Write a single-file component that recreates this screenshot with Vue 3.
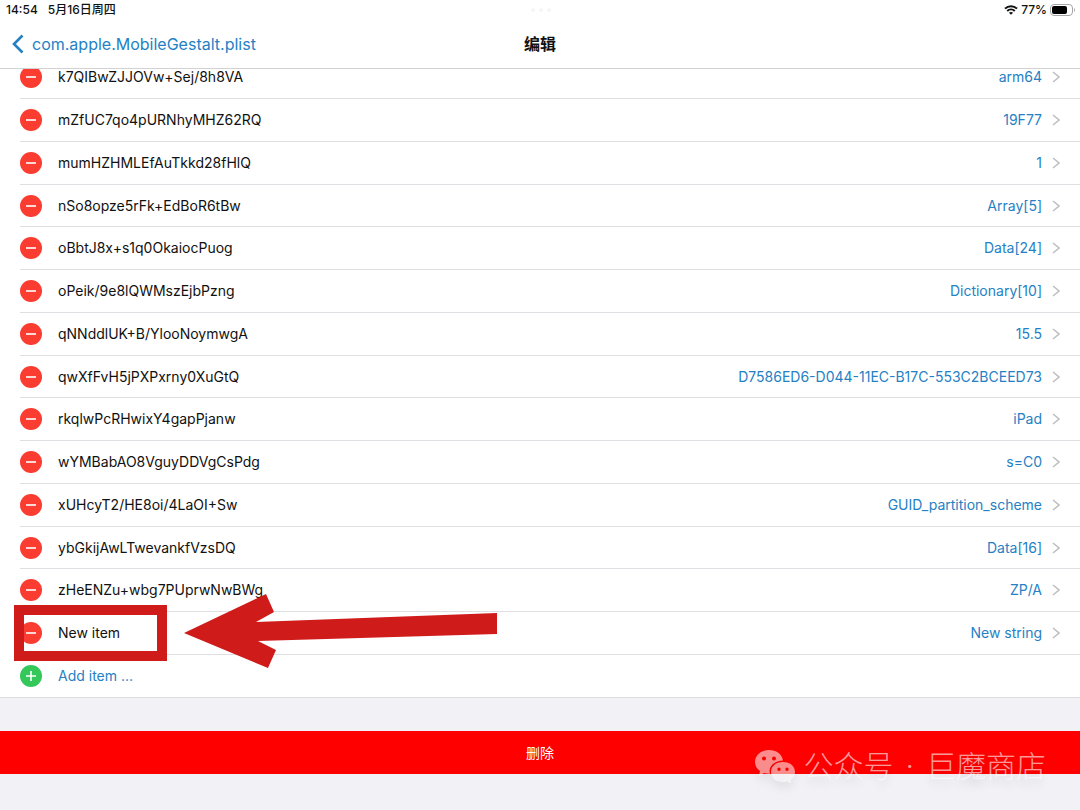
<script setup>
import { ref } from 'vue'

const items = ref([
  { key: 'k7QIBwZJJOVw+Sej/8h8VA', value: 'arm64' },
  { key: 'mZfUC7qo4pURNhyMHZ62RQ', value: '19F77' },
  { key: 'mumHZHMLEfAuTkkd28fHlQ', value: '1' },
  { key: 'nSo8opze5rFk+EdBoR6tBw', value: 'Array[5]' },
  { key: 'oBbtJ8x+s1q0OkaiocPuog', value: 'Data[24]' },
  { key: 'oPeik/9e8lQWMszEjbPzng', value: 'Dictionary[10]' },
  { key: 'qNNddlUK+B/YlooNoymwgA', value: '15.5' },
  { key: 'qwXfFvH5jPXPxrny0XuGtQ', value: 'D7586ED6-D044-11EC-B17C-553C2BCEED73' },
  { key: 'rkqlwPcRHwixY4gapPjanw', value: 'iPad' },
  { key: 'wYMBabAO8VguyDDVgCsPdg', value: 's=C0' },
  { key: 'xUHcyT2/HE8oi/4LaOI+Sw', value: 'GUID_partition_scheme' },
  { key: 'ybGkijAwLTwevankfVzsDQ', value: 'Data[16]' },
  { key: 'zHeENZu+wbg7PUprwNwBWg', value: 'ZP/A' },
  { key: 'New item', value: 'New string', marked: true }
])

function removeItem(index) {
  items.value.splice(index, 1)
}

function addItem() {
  items.value.push({ key: 'New item', value: 'New string' })
}
</script>

<template>
  <div class="screen">
    <header class="header">
      <div class="status">
        <div class="status-left">
          <span>14:54</span>
          <span>5月16日周四</span>
        </div>
        <svg class="dots" viewBox="0 0 20 4" aria-hidden="true">
          <circle cx="2" cy="2" r="2" />
          <circle cx="10" cy="2" r="2" />
          <circle cx="18" cy="2" r="2" />
        </svg>
        <div class="status-right">
          <svg class="wifi" viewBox="0 0 14 10" aria-hidden="true">
            <path d="M1 3.6C4.4.3 9.6.3 13 3.6M3.2 5.9c2.2-2 5.4-2 7.6 0" />
            <path class="dot" d="M7 9.8 4.9 7.7c1.2-1 3-1 4.2 0z" />
          </svg>
          <span>77%</span>
          <svg class="battery" viewBox="0 0 26 12" aria-hidden="true">
            <rect class="shell" x="0.5" y="0.5" width="22" height="11" rx="3.5" />
            <rect x="2" y="2" width="15" height="8" rx="2" />
            <path class="tip" d="M24 4v4c1.3-.6 1.3-3.4 0-4z" />
          </svg>
        </div>
      </div>
      <nav class="nav">
        <a class="back" href="#">
          <svg viewBox="0 0 12 20" aria-hidden="true"><path d="M10.5 1.500 2 10l8.500 8.500" /></svg>
          <span>com.apple.MobileGestalt.plist</span>
        </a>
        <h1>编辑</h1>
      </nav>
    </header>

    <main>
      <ul class="list">
        <li v-for="(item, index) in items" :key="index" class="row">
          <button class="round remove" type="button" :aria-label="`Delete ${item.key}`" @click="removeItem(index)">
            <svg viewBox="0 0 22 22"><path d="M6 11h10" /></svg>
          </button>
          <span class="name">{{ item.key }}</span>
          <a class="value" href="#">
            <span>{{ item.value }}</span>
            <svg viewBox="0 0 8 12" aria-hidden="true"><path d="M1 1l6 5-6 5" /></svg>
          </a>
          <template v-if="item.marked">
            <span class="mark-box"></span>
            <svg class="mark-arrow" viewBox="0 0 316 76" aria-hidden="true">
              <path d="M1 40 83 1l8 18-18 10 241-9v21L75 48l18 9-8 18z" />
            </svg>
          </template>
        </li>
        <li class="row add-row">
          <button class="add" type="button" @click="addItem">
            <span class="round plus">
              <svg viewBox="0 0 22 22"><path d="M6 11h10M11 6v10" /></svg>
            </span>
            <span>Add item ...</span>
          </button>
        </li>
      </ul>
      <button class="delete" type="button">删除</button>
    </main>

    <div class="watermark">
      <svg viewBox="0 0 42 34" aria-hidden="true">
        <path
          fill-rule="evenodd"
          d="M15 1C7 1 1 6 1 13c0 4 2 7 5 9l-1 5 5-3c2 .6 4 .8 6 .7-2-7 4-13 13-13.2C28 5 22 1 15 1zM10 7.500a2 2 0 1 1 0 4 2 2 0 0 1 0-4zm10 0a2 2 0 1 1 0 4 2 2 0 0 1 0-4z"
        />
        <path
          fill-rule="evenodd"
          d="M29 13c-7 0-12 4-12 10s5 10 12 10c1 0 3-.2 4.300-.7l4.200 2-1-3.600c2.800-1.800 4.500-4.500 4.500-7.700 0-6-5-10-12-10zm-4 5.500a1.700 1.700 0 1 1 0 3.400 1.700 1.700 0 0 1 0-3.400zm8 0a1.700 1.700 0 1 1 0 3.400 1.700 1.700 0 0 1 0-3.400z"
        />
      </svg>
      <span class="account">
        <span>公众号</span>
        <span>·</span>
        <span>巨魔商店</span>
      </span>
    </div>
  </div>
</template>

<style>
body {
  margin: 0;
  background: #f2f1f6;
}
</style>

<style scoped>
.screen {
  position: relative;
  min-height: 100vh;
  overflow: hidden;
  background: #f2f1f6;
  color: #111;
  font-family: Inter, "Noto Sans CJK SC", sans-serif;
  font-size: 14px;
  line-height: 20px;
}

button {
  padding: 0;
  border: 0;
  background: none;
  font: inherit;
  cursor: pointer;
}

a {
  color: #2581c4;
  text-decoration: none;
}

svg {
  display: block;
  fill: none;
}

/* the list is scrolled a little way under the header */
.header {
  position: relative;
  z-index: 1;
  background: #fff;
  border-bottom: 1px solid #d2d2d4;
}

.status {
  display: grid;
  grid-template-columns: 1fr auto 1fr;
  align-items: center;
  height: 20px;
  padding: 0 4px 0 6px;
  font-size: 12px;
  font-weight: 500;
}

.status-left {
  display: flex;
  gap: 10px;
}

.dots {
  width: 20px;
  height: 4px;
  fill: #f6f6f6;
}

.status-right {
  display: flex;
  align-items: center;
  justify-content: flex-end;
  gap: 3px;
}

.wifi {
  width: 14px;
  height: 10px;
  stroke: #111;
  stroke-width: 2;
}

.wifi .dot {
  fill: #111;
  stroke: none;
}

.battery {
  width: 26px;
  height: 12px;
  fill: #000;
}

.battery .shell {
  fill: none;
  stroke: #a5a5a5;
}

.battery .tip {
  fill: #a5a5a5;
}

.nav {
  display: grid;
  grid-template-columns: 1fr auto 1fr;
  align-items: center;
  height: 48px;
  padding: 0 12px;
  font-size: 16px;
}

.back {
  display: flex;
  align-items: center;
  gap: 8px;
}

.back svg {
  width: 12px;
  height: 20px;
  stroke: #2581c4;
  stroke-width: 2.6;
}

h1 {
  margin: 0;
  font-size: 16px;
  font-weight: 700;
}

.list {
  margin: -13px 0 0;
  padding: 0 0 0 20px;
  list-style: none;
  background: #fff;
  border-bottom: 1px solid #dcdce0;
}

.row {
  position: relative;
  display: flex;
  align-items: center;
  gap: 16px;
  box-sizing: border-box;
  min-height: 43px;
  padding-right: 20px;
  border-bottom: 1px solid #dfdfe3;
}

.row:nth-child(4n) {
  min-height: 42px;
}

.add-row {
  min-height: 42px;
  border-bottom: 0;
}

.round {
  flex: none;
  width: 22px;
  height: 22px;
  border-radius: 50%;
}

.round svg {
  stroke: #fff;
  stroke-width: 1.6;
}

.remove {
  background: #fb3c30;
}

.plus {
  background: #34c759;
}

.value {
  display: flex;
  align-items: center;
  gap: 10px;
  margin-left: auto;
}

.value svg {
  width: 8px;
  height: 12px;
  stroke: #bfbfc3;
  stroke-width: 1.6;
}

.add {
  display: flex;
  align-items: center;
  gap: 16px;
  color: #2581c4;
}

.mark-box {
  position: absolute;
  top: -7px;
  left: -6px;
  box-sizing: border-box;
  width: 153px;
  height: 56px;
  border: 10px solid #d01b1b;
}

.mark-arrow {
  position: absolute;
  top: -19px;
  left: 163px;
  width: 316px;
  height: 76px;
  fill: #d01b1b;
}

.delete {
  display: block;
  width: 100%;
  height: 43px;
  margin: 33px 0 36px;
  background: #f00;
  color: #fff;
}

.watermark {
  position: absolute;
  right: 34px;
  bottom: 22px;
  display: flex;
  align-items: center;
  gap: 8px;
  color: rgba(255, 255, 255, 0.6);
  font-size: 30px;
  font-weight: 300;
  line-height: 44px;
  text-shadow: 0 6px 10px rgba(0, 0, 0, 0.12);
  pointer-events: none;
}

.account {
  display: flex;
  gap: 12px;
}

.watermark svg {
  width: 42px;
  height: 34px;
  fill: rgba(255, 255, 255, 0.55);
  filter: drop-shadow(0 6px 5px rgba(0, 0, 0, 0.12));
}
</style>
